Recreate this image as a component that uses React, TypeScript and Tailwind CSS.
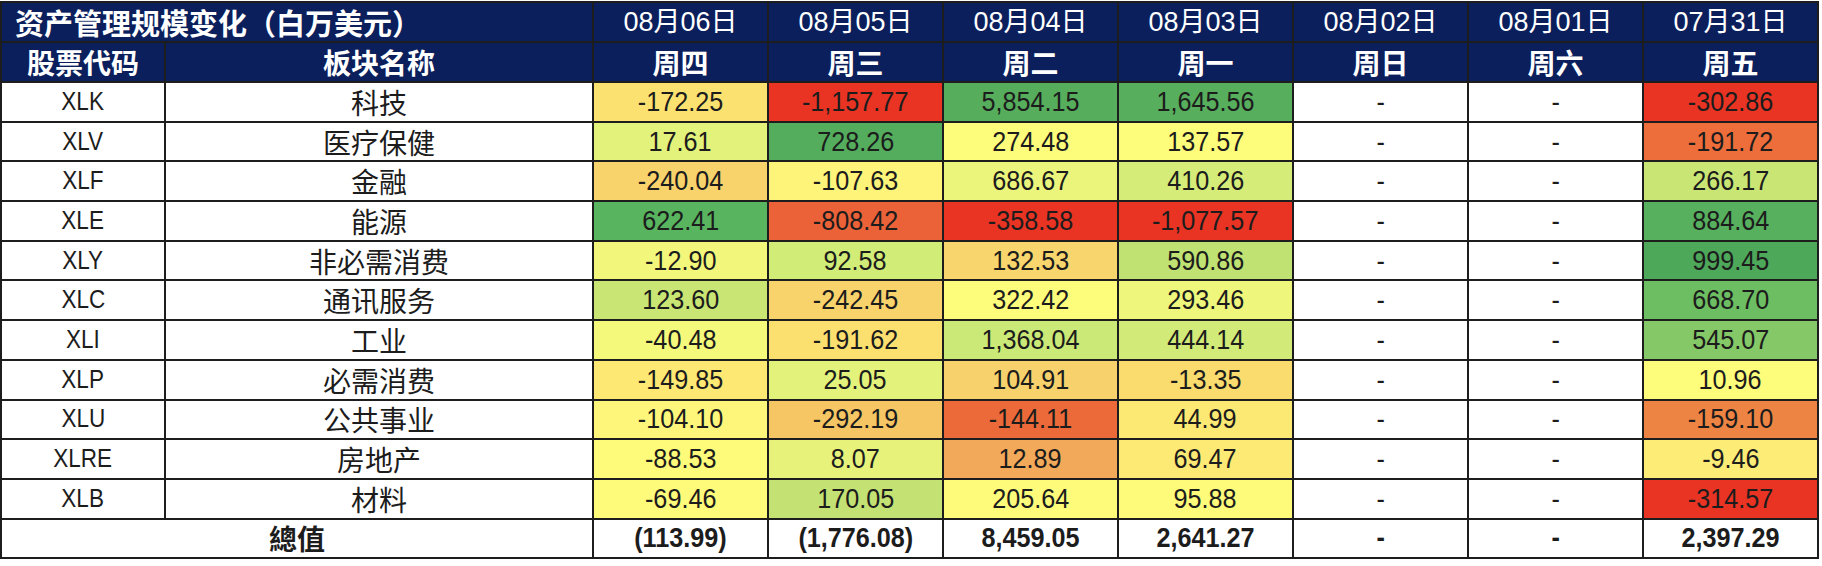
const CJK = "font-['Noto_Sans_CJK_SC',sans-serif]";
const LATIN = "font-['Liberation_Sans','Noto_Sans_CJK_SC',sans-serif]";

const DATES = ['08月06日', '08月05日', '08月04日', '08月03日', '08月02日', '08月01日', '07月31日'];
const DAYS = ['周四', '周三', '周二', '周一', '周日', '周六', '周五'];

type Cell = [string, string] | null;

// cells run 08/06 .. 07/31; null = market closed (dash)
const ROWS: { code: string; name: string; cells: Cell[] }[] = [
  {
    code: 'XLK', name: '科技',
    cells: [['-172.25', '#fbe270'], ['-1,157.77', '#e93424'], ['5,854.15', '#56ae5c'], ['1,645.56', '#57af5d'], null, null, ['-302.86', '#e93424']],
  },
  {
    code: 'XLV', name: '医疗保健',
    cells: [['17.61', '#e3f27a'], ['728.26', '#53ad5c'], ['274.48', '#fefd7b'], ['137.57', '#fefd7b'], null, null, ['-191.72', '#ed6d3b']],
  },
  {
    code: 'XLF', name: '金融',
    cells: [['-240.04', '#f8d26b'], ['-107.63', '#fef47a'], ['686.67', '#ecf57b'], ['410.26', '#d6ec78'], null, null, ['266.17', '#c9e675']],
  },
  {
    code: 'XLE', name: '能源',
    cells: [['622.41', '#59b45f'], ['-808.42', '#ec6238'], ['-358.58', '#e93424'], ['-1,077.57', '#e93424'], null, null, ['884.64', '#56b05e']],
  },
  {
    code: 'XLY', name: '非必需消费',
    cells: [['-12.90', '#f2f77b'], ['92.58', '#d1ec77'], ['132.53', '#f8d66d'], ['590.86', '#bfe272'], null, null, ['999.45', '#4ea85a']],
  },
  {
    code: 'XLC', name: '通讯服务',
    cells: [['123.60', '#c9e675'], ['-242.45', '#f8d36b'], ['322.42', '#fefc7b'], ['293.46', '#eef67b'], null, null, ['668.70', '#6dbd62']],
  },
  {
    code: 'XLI', name: '工业',
    cells: [['-40.48', '#f4f87b'], ['-191.62', '#fbe070'], ['1,368.04', '#cbe976'], ['444.14', '#d2ea77'], null, null, ['545.07', '#84c867']],
  },
  {
    code: 'XLP', name: '必需消费',
    cells: [['-149.85', '#fce872'], ['25.05', '#e3f27a'], ['104.91', '#f7d16b'], ['-13.35', '#f9db6e'], null, null, ['10.96', '#fefc7b']],
  },
  {
    code: 'XLU', name: '公共事业',
    cells: [['-104.10', '#fdf67a'], ['-292.19', '#f5c663'], ['-144.11', '#ec6a39'], ['44.99', '#fce973'], null, null, ['-159.10', '#ee8443']],
  },
  {
    code: 'XLRE', name: '房地产',
    cells: [['-88.53', '#fefa7a'], ['8.07', '#e6f27a'], ['12.89', '#f3a95a'], ['69.47', '#fdea75'], null, null, ['-9.46', '#fdec76']],
  },
  {
    code: 'XLB', name: '材料',
    cells: [['-69.46', '#fefa7a'], ['170.05', '#c3e273'], ['205.64', '#fefb7a'], ['95.88', '#fefa7a'], null, null, ['-314.57', '#e93424']],
  },
];

const TOTALS = ['(113.99)', '(1,776.08)', '8,459.05', '2,641.27', '-', '-', '2,397.29'];

const BORDER = 'border-2 border-[#1d1d1d]';

// Excel 里的窄体数字：Arial 横向压缩
function Narrow({ children, bold = false, size = 'text-[28px]' }: { children: string; bold?: boolean; size?: string }) {
  return (
    <span className={`inline-block scale-x-90 ${LATIN} ${size} leading-none ${bold ? 'font-bold' : 'font-normal'}`}>
      {children}
    </span>
  );
}

export default function App() {
  return (
    <div className={`w-[1822px] h-[566px] bg-white pt-[1px] ${CJK} [text-spacing-trim:space-all]`}>
      <table className={`table-fixed border-collapse w-[1817px] ${BORDER}`}>
        <colgroup>
          <col className="w-[164px]" />
          <col className="w-[428px]" />
          {DATES.map((d) => (
            <col key={d} className="w-[175px]" />
          ))}
        </colgroup>
        <thead>
          {/* 标题 + 日期 */}
          <tr className="h-[40px] bg-[#0b1f5c] text-white">
            <th colSpan={2} className={`${BORDER} pl-[13px] text-left text-[29px] font-bold leading-none`}>
              资产管理规模变化（白万美元）
            </th>
            {DATES.map((d) => (
              <th key={d} className={`${BORDER} ${LATIN} text-center text-[27px] font-normal leading-none`}>
                {d}
              </th>
            ))}
          </tr>
          {/* 列名 + 星期 */}
          <tr className="h-[40px] bg-[#0b1f5c] text-white">
            <th className={`${BORDER} text-center text-[28px] font-bold leading-none`}>股票代码</th>
            <th className={`${BORDER} text-center text-[28px] font-bold leading-none`}>板块名称</th>
            {DAYS.map((d) => (
              <th key={d} className={`${BORDER} text-center text-[28px] font-bold leading-none`}>
                {d}
              </th>
            ))}
          </tr>
        </thead>
        <tbody className="text-[#1c1c1c]">
          {ROWS.map((row) => (
            <tr key={row.code} className="h-[39.7px]">
              <td className={`${BORDER} bg-white text-center`}>
                <Narrow size="text-[25px]">{row.code}</Narrow>
              </td>
              <td className={`${BORDER} bg-white text-center text-[28px] leading-none`}>{row.name}</td>
              {row.cells.map((c, i) =>
                c ? (
                  <td key={i} className={`${BORDER} text-center`} style={{ backgroundColor: c[1] }}>
                    <Narrow>{c[0]}</Narrow>
                  </td>
                ) : (
                  <td key={i} className={`${BORDER} bg-white text-center`}>
                    <Narrow>-</Narrow>
                  </td>
                ),
              )}
            </tr>
          ))}
          {/* 合计 */}
          <tr className="h-[39.7px]">
            <td colSpan={2} className={`${BORDER} bg-white text-center text-[28px] font-bold leading-none`}>
              總值
            </td>
            {TOTALS.map((t, i) => (
              <td key={i} className={`${BORDER} bg-white text-center`}>
                <Narrow bold>{t}</Narrow>
              </td>
            ))}
          </tr>
        </tbody>
      </table>
    </div>
  );
}
